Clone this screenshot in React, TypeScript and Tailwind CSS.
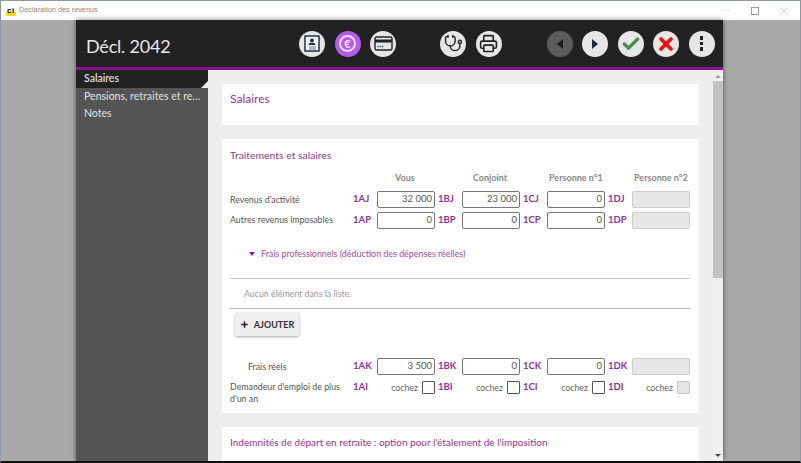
import { Check, Plus, Printer, Stethoscope, X } from "lucide-react";
import type { ReactNode } from "react";

const COLS = ["A", "B", "C", "D"];

function RoundButton({ children, tone = "bg-[#e6e6e6]", gap = "ml-[9.5px]" }: { children: ReactNode; tone?: string; gap?: string }) {
  return (
    <div className={`flex h-[26px] w-[26px] shrink-0 items-center justify-center rounded-full ${tone} ${gap}`}>
      {children}
    </div>
  );
}

function ContactIcon() {
  return (
    <svg width="16" height="17" viewBox="0 0 16 17" fill="none">
      <rect x="1" y="1" width="14" height="15" fill="#f4f4f4" stroke="#23324a" strokeWidth="1.5" />
      <circle cx="8" cy="5.5" r="2" fill="#23324a" />
      <path d="M4.5 10c0-1.6 1.5-2.3 3.5-2.3s3.5.7 3.5 2.3z" fill="#23324a" />
      <path d="M5 12h7M5 14h7" stroke="#777" strokeWidth="1" />
    </svg>
  );
}

function CardIcon() {
  return (
    <svg width="19" height="15" viewBox="0 0 19 15" fill="none">
      <rect x="1" y="1" width="17" height="13" rx="1.5" stroke="#222" strokeWidth="1.4" />
      <rect x="1" y="3.5" width="17" height="3" fill="#222" />
      <path d="M3.5 10.5h6" stroke="#3a5a80" strokeWidth="1.6" strokeDasharray="1.4 .8" />
    </svg>
  );
}

function Triangle({ dir, color }: { dir: "left" | "right"; color: string }) {
  return (
    <svg width="8" height="12" viewBox="0 0 8 12">
      <path d={dir === "left" ? "M7 1v10L1 6z" : "M1 1v10l6-5z"} fill={color} />
    </svg>
  );
}

function Header() {
  return (
    <div className="flex h-[47px] shrink-0 items-center bg-[#222222] pl-[10px]">
      <div className="w-[213px] pt-[5px] text-[18px] tracking-[-0.2px] text-[#e8e8e8]">Décl. 2042</div>
      <RoundButton gap="">
        <ContactIcon />
      </RoundButton>
      <RoundButton tone="bg-[#b45cf0]">
        <div className="flex h-[17px] w-[17px] items-center justify-center rounded-full border-2 border-[#f0e0fa] text-[11px] font-bold leading-none text-[#f0e0fa]">
          €
        </div>
      </RoundButton>
      <RoundButton>
        <CardIcon />
      </RoundButton>
      <RoundButton gap="ml-[44px]">
        <Stethoscope size={19} strokeWidth={1.8} color="#222222" />
      </RoundButton>
      <RoundButton>
        <Printer size={19} strokeWidth={2} color="#222222" />
      </RoundButton>
      <RoundButton tone="bg-[#5c5c5c]" gap="ml-[45px]">
        <Triangle dir="left" color="#1c1c1c" />
      </RoundButton>
      <RoundButton>
        <Triangle dir="right" color="#1f2a3a" />
      </RoundButton>
      <RoundButton>
        <Check size={20} strokeWidth={4} color="#4a8a50" />
      </RoundButton>
      <RoundButton>
        <X size={20} strokeWidth={4.5} color="#ee1111" />
      </RoundButton>
      <RoundButton>
        <div className="flex flex-col gap-[2px]">
          <span className="h-[3.5px] w-[3.5px] bg-[#222222]" />
          <span className="h-[3.5px] w-[3.5px] bg-[#222222]" />
          <span className="h-[3.5px] w-[3.5px] bg-[#222222]" />
        </div>
      </RoundButton>
    </div>
  );
}

function Sidebar() {
  return (
    <div className="w-[132px] shrink-0 bg-[#555555] text-[10.5px] font-medium text-[#dcdcdc]">
      <div className="relative flex h-[17.5px] items-center bg-[#222222] pl-[8px] pt-[1px] text-[#e8e8e8]">
        Salaires
        <span className="absolute bottom-0 right-0 h-0 w-0 border-b-[7px] border-l-[7px] border-b-[#eeeeee] border-l-transparent" />
      </div>
      <div className="flex h-[17.5px] items-center whitespace-nowrap pl-[8px] pt-[1px]">Pensions, retraites et re…</div>
      <div className="flex h-[17.5px] items-center pl-[8px] pt-[1px]">Notes</div>
    </div>
  );
}

function Input({ value, disabled }: { value?: string; disabled?: boolean }) {
  return (
    <div
      className={`flex h-[17px] w-[58px] items-center justify-end rounded-[2px] border pr-[2px] text-[9.5px] ${
        disabled ? "border-[#cccccc] bg-[#e6e6e6]" : "border-[#777777] bg-white"
      } text-[#555555]`}
    >
      {value}
    </div>
  );
}

function Row({ label, code, values, indent }: { label: string; code: string; values: string[]; indent?: boolean }) {
  return (
    <div className="flex h-[17px] items-center text-[8.8px] text-[#555555]">
      <div className={`w-[123px] ${indent ? "pl-[18px]" : ""}`}>{label}</div>
      {COLS.map((c, i) => (
        <div key={c} className="flex w-[85px] items-center last:w-[82px]">
          <div className="w-[24px] text-[9.5px] font-bold text-[#95309c]">1{c}{code}</div>
          <Input value={values[i]} disabled={i === 3} />
        </div>
      ))}
    </div>
  );
}

function CheckRow() {
  return (
    <div className="flex items-start text-[8.8px] text-[#555555]">
      <div className="w-[118px] pr-[4px] leading-[12px]">Demandeur d'emploi de plus d'un an</div>
      <div className="w-[5px]" />
      {COLS.map((c, i) => (
        <div key={c} className="flex h-[13px] w-[85px] items-center last:w-[82px]">
          <div className="w-[24px] text-[9.5px] font-bold text-[#95309c]">1{c}I</div>
          <div className="flex w-[58px] items-center justify-end gap-[4px] text-[#666666]">
            cochez
            <span
              className={`h-[13px] w-[13px] rounded-[1px] border ${
                i === 3 ? "border-[#c4c4c4] bg-[#e6e6e6]" : "border-[#555555] bg-white"
              }`}
            />
          </div>
        </div>
      ))}
    </div>
  );
}

function Content() {
  return (
    <div className="flex min-w-0 flex-1 bg-[#eeeeee]">
      <div className="flex min-w-0 flex-1 flex-col overflow-hidden px-[14px] pt-[14px]">
        <div className="h-[41px] shrink-0 bg-white pl-[8px] pt-[6px] text-[12px] text-[#9c2fa3]">Salaires</div>
        <div className="mt-[14px] h-[274px] shrink-0 bg-white pl-[8px] pr-[9px] pt-[9px]">
          <div className="text-[10.4px] leading-[14px] text-[#8e3a94]">Traitements et salaires</div>
          <div className="mt-[9px] flex h-[14px] items-center pl-[123px] text-[9px] font-bold text-[#888888]">
            <div className="w-[85px] pl-[42px]">Vous</div>
            <div className="w-[85px] pl-[35px]">Conjoint</div>
            <div className="w-[85px] pl-[26px]">Personne n°1</div>
            <div className="pl-[26px]">Personne n°2</div>
          </div>
          <div className="mt-[6px] flex flex-col gap-[3.5px]">
            <Row label="Revenus d'activité" code="J" values={["32 000", "23 000", "0"]} />
            <Row label="Autres revenus imposables" code="P" values={["0", "0", "0"]} />
          </div>
          <div className="mt-[19.5px] flex items-center pl-[19px] text-[8.9px] leading-[12px] text-[#a24aa8]">
            <span className="mr-[6px] h-0 w-0 border-x-[3.5px] border-t-[4px] border-x-transparent border-t-[#8a1a90]" />
            Frais professionnels (déduction des dépenses réelles)
          </div>
          <div className="mt-[18px] border-t border-[#c4c4c4] pl-[14px] pt-[9px] text-[8.8px] leading-[12px] text-[#999999]">
            Aucun élément dans la liste.
          </div>
          <div className="mt-[8px] border-t border-[#b8b8b8] pl-[5px] pt-[4px]">
            <div className="flex h-[23px] w-[64px] items-center justify-center gap-[5px] rounded-[2px] bg-[#eeeeee] text-[9px] font-bold text-[#333333] shadow-[0_1px_3px_rgba(0,0,0,0.35)]">
              <Plus size={9} strokeWidth={4} color="#222222" />
              AJOUTER
            </div>
          </div>
          <div className="mt-[22px]">
            <Row label="Frais réels" code="K" values={["3 500", "0", "0"]} indent />
          </div>
          <div className="mt-[6px]">
            <CheckRow />
          </div>
        </div>
        <div className="mt-[14px] flex-1 bg-white pl-[8px] pt-[8px] text-[10px] text-[#9c2fa3]">
          Indemnités de départ en retraite : option pour l'étalement de l'imposition
        </div>
      </div>
      <div className="flex w-[10px] shrink-0 flex-col items-center bg-[#f0f0f0]">
        <span className="mt-[5px] h-0 w-0 border-x-[3px] border-b-[3px] border-x-transparent border-b-[#999999]" />
        <div className="mt-[3px] h-[197px] w-full bg-[#c2c2c2]" />
        <div className="flex-1" />
        <span className="mb-[4px] h-0 w-0 border-x-[3px] border-t-[3px] border-x-transparent border-t-[#444444]" />
      </div>
    </div>
  );
}

export default function App() {
  return (
    <div className="flex h-[463px] w-[801px] flex-col overflow-hidden border-x border-t border-b-2 border-x-[#8a98a8] border-t-[#8a98a8] border-b-[#111111] bg-[#a9a9a9] font-['Lato',sans-serif]">
      <div className="flex h-[19px] shrink-0 items-center bg-white pl-[5px] font-['Liberation_Sans',sans-serif] text-[7.3px] text-[#888888]">
        <div className="flex h-[10px] w-[10px] items-center justify-center bg-linear-to-t from-[#f7d917] from-40% to-white to-40% text-[8px] font-bold leading-none tracking-[0.6px] text-black">
          ci
        </div>
        <span className="ml-[3px]">Déclaration des revenus</span>
        <div className="ml-auto flex items-center">
          <span className="h-px w-[8px] bg-[#e8e8e8]" />
          <span className="ml-[21px] h-[8px] w-[8px] border border-[#999999]" />
          <X size={10} strokeWidth={1} color="#999999" className="ml-[20px] mr-[11px]" />
        </div>
      </div>
      <div className="flex min-h-0 flex-1 pl-[75px] pr-[77px]">
        <div className="flex min-w-0 flex-1 flex-col shadow-[0_0_5px_rgba(0,0,0,0.55)]">
          <Header />
          <div className="h-[3px] shrink-0 bg-[#8a0d8f]" />
          <div className="flex min-h-0 flex-1">
            <Sidebar />
            <Content />
          </div>
        </div>
      </div>
    </div>
  );
}
